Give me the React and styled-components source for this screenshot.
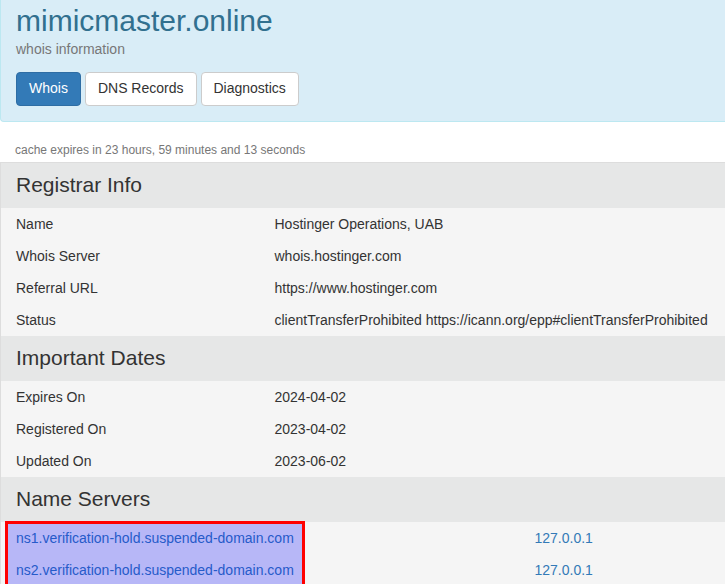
import styled, { createGlobalStyle } from "styled-components";

const GlobalStyle = createGlobalStyle`
  html, body {
    margin: 0;
    padding: 0;
    overflow: hidden;
    background: #fff;
  }
  body {
    font-family: "Liberation Sans", Helvetica, Arial, sans-serif;
    font-size: 14px;
    line-height: 20px;
    color: #333;
  }
`;

const Page = styled.div`
  width: 100%;
`;

const Jumbotron = styled.div`
  background: #d9edf7;
  border: 1px solid #bce8f1;
  border-top: none;
  border-right: none;
  border-bottom-left-radius: 4px;
  padding: 4px 16px 15px 15px;
`;

const Title = styled.h1`
  margin: 0;
  font-size: 30px;
  line-height: 33px;
  font-weight: 400;
  color: #31708f;
`;

const Subtitle = styled.div`
  margin-top: 2px;
  color: #777;
`;

const Nav = styled.div`
  display: flex;
  gap: 4px;
  margin-top: 13px;
`;

const NavButton = styled.a`
  display: inline-block;
  padding: 5px 12px 7px;
  font-size: 14px;
  line-height: 20px;
  border-radius: 4px;
  border: 1px solid ${(p) => (p.$active ? "#2e6da4" : "#ccc")};
  background: ${(p) => (p.$active ? "#337ab7" : "#fff")};
  color: ${(p) => (p.$active ? "#fff" : "#333")};
  text-decoration: none;
  cursor: pointer;
`;

const Cache = styled.div`
  margin: 20px 0 3px 15px;
  font-size: 12px;
  line-height: 17px;
  color: #777;
`;

const Table = styled.table`
  width: 100%;
  border-collapse: collapse;
  table-layout: fixed;
  border-left: 1px solid #ddd;
  border-top: ${(p) => (p.$top ? "1px solid #ddd" : "none")};
`;

const HeaderCell = styled.th`
  background: #e6e7e7;
  padding: 10px 15px 11px;
  font-size: 21px;
  line-height: 24px;
  font-weight: 400;
  text-align: left;
  color: #333;
`;

const Cell = styled.td`
  background: #f5f5f5;
  padding: 6px 15px;
  line-height: 20px;
  white-space: nowrap;
  vertical-align: top;
`;

const Link = styled.a`
  color: #337ab7;
  text-decoration: none;
`;

const NsBlock = styled.div`
  position: relative;
`;

const Highlight = styled.div`
  position: absolute;
  left: 5px;
  top: -1px;
  width: 294px;
  height: 80px;
  border: 3px solid #ff0000;
  background: rgba(0, 0, 255, 0.25);
  pointer-events: none;
`;

const sections = [
  {
    title: "Registrar Info",
    rows: [
      ["Name", "Hostinger Operations, UAB"],
      ["Whois Server", "whois.hostinger.com"],
      ["Referral URL", "https://www.hostinger.com"],
      ["Status", "clientTransferProhibited https://icann.org/epp#clientTransferProhibited"],
    ],
  },
  {
    title: "Important Dates",
    rows: [
      ["Expires On", "2024-04-02"],
      ["Registered On", "2023-04-02"],
      ["Updated On", "2023-06-02"],
    ],
  },
];

const nameServers = [
  ["ns1.verification-hold.suspended-domain.com", "127.0.0.1"],
  ["ns2.verification-hold.suspended-domain.com", "127.0.0.1"],
];

const App = () => {
  return (
    <Page>
      <GlobalStyle />
      <Jumbotron>
        <Title>mimicmaster.online</Title>
        <Subtitle>whois information</Subtitle>
        <Nav>
          <NavButton $active>Whois</NavButton>
          <NavButton>DNS Records</NavButton>
          <NavButton>Diagnostics</NavButton>
        </Nav>
      </Jumbotron>
      <Cache>cache expires in 23 hours, 59 minutes and 13 seconds</Cache>
      <Table $top>
        <colgroup>
          <col style={{ width: 259 }} />
          <col />
        </colgroup>
        <tbody>
          {sections.map((s) => [
            <tr key={s.title}>
              <HeaderCell colSpan={2}>{s.title}</HeaderCell>
            </tr>,
            ...s.rows.map(([k, v]) => (
              <tr key={k}>
                <Cell>{k}</Cell>
                <Cell>{v}</Cell>
              </tr>
            )),
          ])}
          <tr>
            <HeaderCell colSpan={2}>Name Servers</HeaderCell>
          </tr>
        </tbody>
      </Table>
      <NsBlock>
        <Table>
          <colgroup>
            <col style={{ width: 519 }} />
            <col />
          </colgroup>
          <tbody>
            {nameServers.map(([ns, ip]) => (
              <tr key={ns}>
                <Cell>
                  <Link>{ns}</Link>
                </Cell>
                <Cell>
                  <Link>{ip}</Link>
                </Cell>
              </tr>
            ))}
          </tbody>
        </Table>
        <Highlight />
      </NsBlock>
    </Page>
  );
};

export default App;
